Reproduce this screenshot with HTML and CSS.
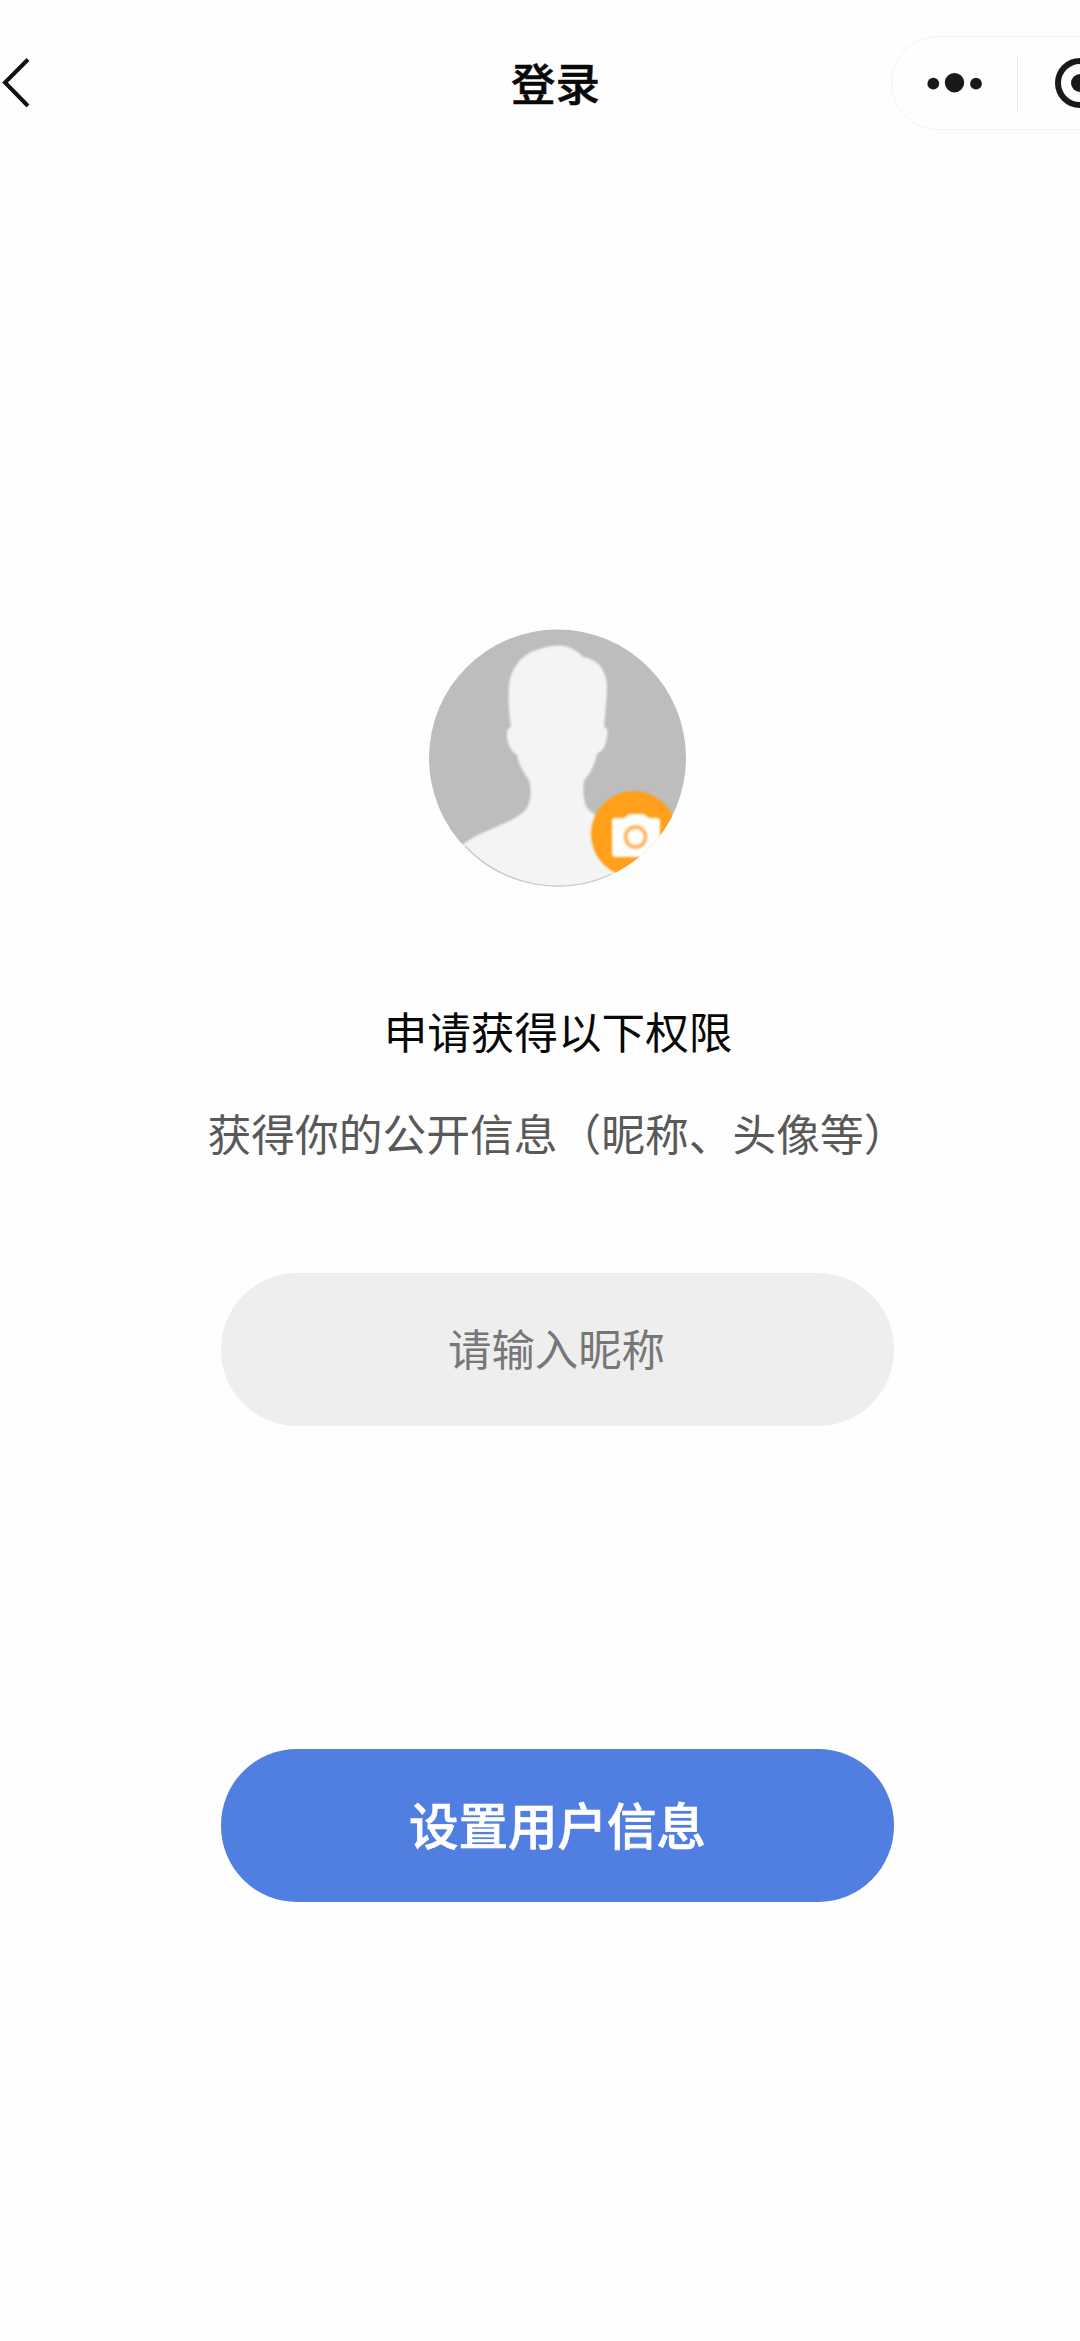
FILE: index.html
```html
<!DOCTYPE html>
<html lang="zh-CN">
<head>
<meta charset="utf-8">
<title>登录</title>
<link rel="stylesheet" href="styles.css">
</head>
<body>
<header class="navbar">
  <svg class="back" width="32" height="56" viewBox="0 0 32 56" fill="none" stroke="#111" stroke-width="4"><path d="M28 4.500 5 27.500l23 23.500"/></svg>
  <h1 class="title">登录</h1>
  <div class="capsule">
    <svg class="more" width="56" height="24" viewBox="0 0 56 24" fill="#191919"><circle cx="7.300" cy="12.700" r="5.900"/><circle cx="28.500" cy="11.700" r="9.700"/><circle cx="50" cy="12.700" r="5.900"/></svg>
    <span class="divider"></span>
    <svg class="target" width="52" height="52" viewBox="0 0 52 52"><circle cx="26" cy="26" r="22" fill="none" stroke="#191919" stroke-width="6"/><circle cx="26" cy="26" r="9" fill="#191919"/></svg>
  </div>
</header>
<main class="login">
  <svg class="avatar" width="258" height="258" viewBox="1 0 258 258">
    <defs><clipPath id="round"><circle cx="129.500" cy="129" r="128.500"/></clipPath></defs>
    <g clip-path="url(#round)">
      <rect width="260" height="258" fill="#bdbdbd"/>
      <g class="picture">
        <path d="M129 16.500C138 16 147 19 155 28C169 30 178 40 179 56C179 71 177 86 176 98C180 99 180 102 179 108C178 116 175 122 169 125C167 136 162 144 156 152C155 160 155 168 158 177C163 186 178 192 190 197L230 220V270H15V228L37 214C52 202 80 196 94 184C103 178 104 163 101 151C95 143 91 136 89 126C84 123 80 117 79 109C79 102 79 99 83 98C81 84 80 70 81 57C83 34 99 19 129 16.500Z" fill="#f4f4f4"/>
        <circle cx="206" cy="205" r="43" fill="#ff9f1a"/>
        <path d="M187 189h9l5-4h15l5 4h8q3 0 3 3v33q0 3-3 3h-42q-3 0-3-3v-33q0-3 3-3z" fill="#fff"/>
        <circle cx="207.500" cy="208" r="10" fill="none" stroke="#ffb763" stroke-width="3.800"/>
      </g>
    </g>
    <path d="M37 217A128 128 0 0 0 184 245" fill="none" stroke="#c8c8c8" stroke-width="1.200"/>
  </svg>
  <h2 class="heading">申请获得以下权限</h2>
  <p class="description">获得你的公开信息（昵称、头像等）</p>
  <input class="nickname" type="text" placeholder="请输入昵称">
  <button class="submit" type="button">设置用户信息</button>
</main>
</body>
</html>
```
FILE: styles.css
```css
* {
  box-sizing: border-box;
}

body {
  margin: 0;
  min-height: 2341px;
  overflow: hidden;
  background: #fefefe;
  color: #080808;
  font-family: "Noto Sans CJK SC", sans-serif;
}

.navbar {
  display: grid;
  grid-template-columns: 223px 665px 192px;
  align-items: center;
  height: 165px;
}

.back {
  display: block;
}

.title {
  margin: 0;
  padding-bottom: 2px;
  text-align: center;
  font-size: 44.5px;
  font-weight: 500;
  line-height: 64px;
  -webkit-text-stroke: 0.5px currentColor;
}

.capsule {
  display: flex;
  align-items: center;
  width: 240px;
  height: 94px;
  margin-left: 3px;
  padding-left: 34px;
  border: 1px solid #f3f3f3;
  border-radius: 47px;
}

.more,
.target {
  flex: none;
}

.divider {
  width: 1px;
  height: 56px;
  margin: 0 36px 0 35px;
  background: #e8e8e8;
}

.login {
  display: flex;
  flex-direction: column;
  align-items: center;
  width: 1115px;
  padding-top: 464px;
}

.avatar {
  display: block;
}

.picture {
  filter: blur(0.8px);
}

.heading {
  margin: 111px 0 0;
  padding-left: 1px;
  font-size: 43.6px;
  font-weight: 400;
  line-height: 64px;
}

.description {
  margin: 38px 0 0;
  color: #595959;
  font-size: 43.75px;
  line-height: 64px;
  white-space: nowrap;
}

.nickname,
.submit {
  width: 673px;
  height: 153px;
  padding: 0 0 5px;
  border: 0;
  border-radius: 76px;
  font-family: inherit;
  text-align: center;
}

.nickname {
  margin-top: 109px;
  padding-right: 2px;
  background: #eee;
  color: #333;
  font-size: 43.4px;
}

.nickname::placeholder {
  color: #777;
  opacity: 1;
}

.submit {
  margin-top: 323px;
  background: #507fe1;
  color: #fff;
  font-size: 49.5px;
  font-weight: 500;
  -webkit-text-stroke: 0.7px currentColor;
}
```
